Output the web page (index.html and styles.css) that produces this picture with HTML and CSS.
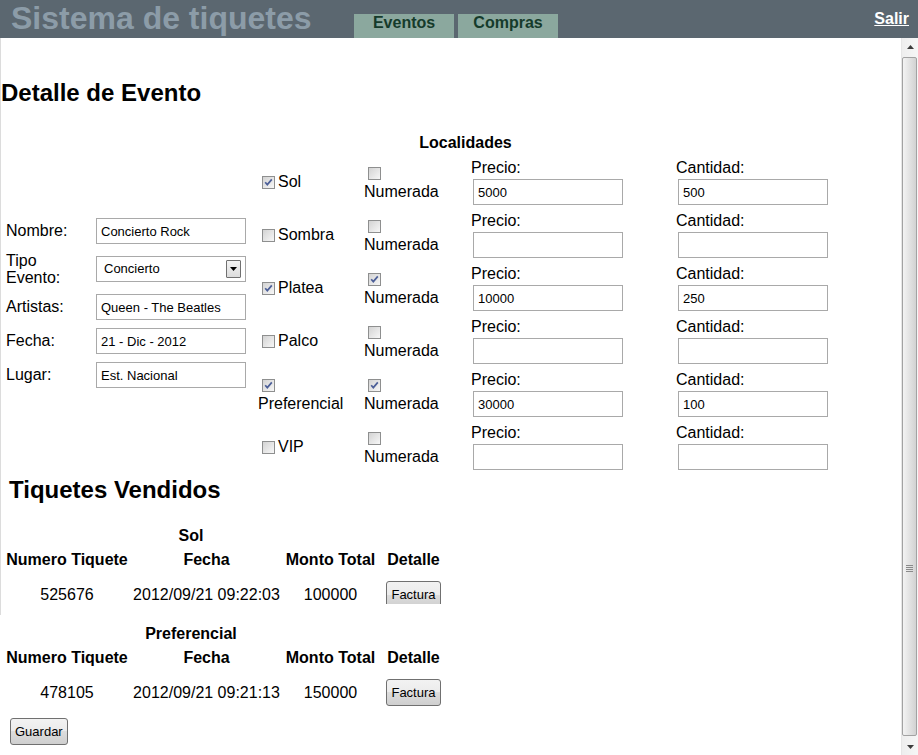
FILE: index.html
```html
<!DOCTYPE html>
<html lang="es">
<head>
<meta charset="utf-8">
<title>Sistema de tiquetes</title>
<link rel="stylesheet" href="styles.css">
</head>
<body>
<header class="topbar">
  <div class="brand">Sistema de tiquetes</div>
  <nav class="tabs">
    <a class="tab" href="#">Eventos</a>
    <a class="tab" href="#">Compras</a>
  </nav>
  <a class="logout" href="#">Salir</a>
</header>
<div class="frame">
  <main class="content">
    <section class="panel">
      <h2 class="title">Detalle de Evento</h2>
      <div class="event-form">
        <div class="fields">
          <label class="f-label">Nombre:</label>
          <input class="txt" type="text" value="Concierto Rock">
          <label class="f-label two">Tipo Evento:</label>
          <div class="select"><span>Concierto</span><span class="dd"><svg width="7" height="4" viewBox="0 0 7 4"><polygon points="0,0 7,0 3.5,4" fill="#000"/></svg></span></div>
          <label class="f-label">Artistas:</label>
          <input class="txt" type="text" value="Queen - The Beatles">
          <label class="f-label">Fecha:</label>
          <input class="txt" type="text" value="21 - Dic - 2012">
          <label class="f-label">Lugar:</label>
          <input class="txt" type="text" value="Est. Nacional">
        </div>
        <div class="zones">
          <div class="zones-head">Localidades</div>

          <div class="zone-name"><span class="cb"><svg width="11" height="11" viewBox="0 0 11 11"><polyline points="2.2,5.2 4.3,7.6 8.8,2.4" fill="none" stroke="#4c5f98" stroke-width="1.7"/></svg></span>Sol</div>
          <div class="zone-num"><span class="cb"></span>Numerada</div>
          <div class="zone-field"><span class="z-label">Precio:</span><input class="txt" type="text" value="5000"></div>
          <div class="zone-field"><span class="z-label">Cantidad:</span><input class="txt" type="text" value="500"></div>

          <div class="zone-name"><span class="cb"></span>Sombra</div>
          <div class="zone-num"><span class="cb"></span>Numerada</div>
          <div class="zone-field"><span class="z-label">Precio:</span><input class="txt" type="text" value=""></div>
          <div class="zone-field"><span class="z-label">Cantidad:</span><input class="txt" type="text" value=""></div>

          <div class="zone-name"><span class="cb"><svg width="11" height="11" viewBox="0 0 11 11"><polyline points="2.2,5.2 4.3,7.6 8.8,2.4" fill="none" stroke="#4c5f98" stroke-width="1.7"/></svg></span>Platea</div>
          <div class="zone-num"><span class="cb"><svg width="11" height="11" viewBox="0 0 11 11"><polyline points="2.2,5.2 4.3,7.6 8.8,2.4" fill="none" stroke="#4c5f98" stroke-width="1.7"/></svg></span>Numerada</div>
          <div class="zone-field"><span class="z-label">Precio:</span><input class="txt" type="text" value="10000"></div>
          <div class="zone-field"><span class="z-label">Cantidad:</span><input class="txt" type="text" value="250"></div>

          <div class="zone-name"><span class="cb"></span>Palco</div>
          <div class="zone-num"><span class="cb"></span>Numerada</div>
          <div class="zone-field"><span class="z-label">Precio:</span><input class="txt" type="text" value=""></div>
          <div class="zone-field"><span class="z-label">Cantidad:</span><input class="txt" type="text" value=""></div>

          <div class="zone-name stack"><span class="cb"><svg width="11" height="11" viewBox="0 0 11 11"><polyline points="2.2,5.2 4.3,7.6 8.8,2.4" fill="none" stroke="#4c5f98" stroke-width="1.7"/></svg></span>Preferencial</div>
          <div class="zone-num"><span class="cb"><svg width="11" height="11" viewBox="0 0 11 11"><polyline points="2.2,5.2 4.3,7.6 8.8,2.4" fill="none" stroke="#4c5f98" stroke-width="1.7"/></svg></span>Numerada</div>
          <div class="zone-field"><span class="z-label">Precio:</span><input class="txt" type="text" value="30000"></div>
          <div class="zone-field"><span class="z-label">Cantidad:</span><input class="txt" type="text" value="100"></div>

          <div class="zone-name"><span class="cb"></span>VIP</div>
          <div class="zone-num"><span class="cb"></span>Numerada</div>
          <div class="zone-field"><span class="z-label">Precio:</span><input class="txt" type="text" value=""></div>
          <div class="zone-field"><span class="z-label">Cantidad:</span><input class="txt" type="text" value=""></div>
        </div>
      </div>
      <h2 class="title sold">Tiquetes Vendidos</h2>
      <div class="clip">
        <div class="tickets">
          <div class="t-cap">Sol</div>
          <div class="t-head first">Numero Tiquete</div>
          <div class="t-head">Fecha</div>
          <div class="t-head">Monto Total</div>
          <div class="t-head">Detalle</div>
          <div class="t-cell">525676</div>
          <div class="t-cell">2012/09/21 09:22:03</div>
          <div class="t-cell">100000</div>
          <div class="t-cell"><button class="btn" type="button">Factura</button></div>
        </div>
      </div>
    </section>
    <div class="tickets second">
      <div class="t-cap">Preferencial</div>
      <div class="t-head first">Numero Tiquete</div>
      <div class="t-head">Fecha</div>
      <div class="t-head">Monto Total</div>
      <div class="t-head">Detalle</div>
      <div class="t-cell">478105</div>
      <div class="t-cell">2012/09/21 09:21:13</div>
      <div class="t-cell">150000</div>
      <div class="t-cell"><button class="btn" type="button">Factura</button></div>
    </div>
    <button class="btn save" type="button">Guardar</button>
  </main>
  <div class="scrollbar">
    <div class="sb-btn"><svg width="7" height="4" viewBox="0 0 7 4"><polygon points="0,4 7,4 3.5,0" fill="#3c3c3c"/></svg></div>
    <div class="sb-thumb"><div class="grip"><span></span><span></span><span></span><span></span></div></div>
    <div class="sb-btn"><svg width="7" height="4" viewBox="0 0 7 4"><polygon points="0,0 7,0 3.5,4" fill="#3c3c3c"/></svg></div>
  </div>
</div>
</body>
</html>
```

FILE: styles.css
```css
html, body {
  margin: 0;
  padding: 0;
  height: 755px;
  overflow: hidden;
}
body {
  font-family: "Liberation Sans", Arial, sans-serif;
  font-size: 16px;
  line-height: 18px;
  color: #000;
  background: #fff;
}

/* ---------- top bar ---------- */
.topbar {
  height: 38px;
  background: #5b6770;
  display: flex;
  align-items: flex-start;
}
.brand {
  padding-left: 11px;
  font-weight: bold;
  font-size: 32px;
  line-height: 36px;
  color: #8c9ca8;
  white-space: nowrap;
}
.tabs {
  display: flex;
  gap: 4px;
  margin-top: 14px;
  margin-left: 42.5px;
}
.tab {
  width: 100px;
  height: 24px;
  box-sizing: border-box;
  line-height: 18px;
  text-align: center;
  background: #8ba89e;
  color: #153b2b;
  font-weight: bold;
  font-size: 16px;
  text-decoration: none;
}
.logout {
  margin-left: auto;
  margin-top: 10px;
  margin-right: 9px;
  color: #fff;
  font-weight: bold;
  font-size: 16px;
  line-height: 18px;
  text-decoration: underline;
}

/* ---------- frame ---------- */
.frame {
  display: flex;
  height: 717px;
}
.content {
  flex: 1;
  min-width: 0;
  overflow: hidden;
}
.panel {
  border-left: 1px solid #dcdcdc;
  padding-top: 41px;
  padding-bottom: 11px;
}
.title {
  margin: 0;
  font-size: 24px;
  line-height: 28px;
  font-weight: bold;
  white-space: nowrap;
}
.title.sold {
  margin-top: 6px;
  padding-left: 8px;
}

/* ---------- event form ---------- */
.event-form {
  display: flex;
  align-items: center;
  margin-top: 27px;
}
.fields {
  display: grid;
  grid-template-columns: 80px 150px;
  grid-template-rows: 26px 34px 26px 26px 26px;
  column-gap: 10px;
  row-gap: 8px;
  align-items: center;
  margin-left: 5px;
  margin-top: 2px;
}
.f-label.two {
  line-height: 17px;
}
.txt {
  width: 150px;
  height: 26px;
  box-sizing: border-box;
  margin: 0;
  padding: 0 4px;
  border: 1px solid #a9a9a9;
  background: #fff;
  color: #000;
  font-family: "Liberation Sans", Arial, sans-serif;
  font-size: 13px;
  outline: none;
}
.select {
  width: 150px;
  height: 26px;
  box-sizing: border-box;
  border: 1px solid #a9a9a9;
  display: flex;
  align-items: center;
  padding-left: 7px;
  font-size: 13px;
}
.dd {
  margin-left: auto;
  margin-right: 4px;
  width: 15px;
  height: 18px;
  box-sizing: border-box;
  border: 1px solid #707070;
  border-radius: 1px;
  background: linear-gradient(#f4f4f4, #dcdcdc);
  display: flex;
  align-items: center;
  justify-content: center;
}
.dd svg { display: block; }

.zones {
  display: grid;
  grid-template-columns: 103px 104px 202px 153px;
  grid-template-rows: 18px repeat(6, 46px);
  column-gap: 3px;
  row-gap: 7px;
  margin-left: 12px;
}
.zones-head {
  grid-column: 1 / 4;
  text-align: center;
  font-weight: bold;
}
.zone-name {
  grid-column-start: 1;
  display: flex;
  align-items: center;
  white-space: nowrap;
}
.zone-name.stack,
.zone-num {
  flex-direction: column;
  align-items: flex-start;
  justify-content: center;
}
.zone-num {
  display: flex;
}
.cb {
  display: flex;
  align-items: center;
  justify-content: center;
  flex-shrink: 0;
  width: 13px;
  height: 13px;
  box-sizing: border-box;
  margin: 3px 3px 3px 4px;
  border: 1px solid #8e8f8f;
  background: linear-gradient(135deg, #d3d3d3, #f7f7f7);
}
.cb svg { display: block; }
.zone-field {
  display: flex;
  flex-direction: column;
  align-items: flex-start;
}
.z-label {
  line-height: 18px;
}
.zone-field .txt {
  margin: 2px 0 0 2px;
}

/* ---------- tickets ---------- */
.clip {
  margin-top: 23px;
  height: 77px;
  overflow: hidden;
}
.tickets {
  display: grid;
  grid-template-columns: 122px 147px 91px 65px;
  grid-template-rows: 18px 18px 33px;
  column-gap: 5px;
  row-gap: 6px;
  margin-left: 5px;
}
.tickets.second {
  margin-left: 6px;
  margin-top: 10px;
}
.t-cap {
  grid-column: 1 / 4;
  text-align: center;
  font-weight: bold;
}
.t-head {
  text-align: center;
  font-weight: bold;
  white-space: nowrap;
}
.t-head.first {
  grid-column-start: 1;
}
.t-cell {
  align-self: end;
  height: 27px;
  display: flex;
  align-items: center;
  justify-content: center;
  white-space: nowrap;
}
.btn {
  height: 27px;
  min-width: 55px;
  box-sizing: border-box;
  margin: 0;
  padding: 0 4px;
  border: 1px solid #707070;
  border-radius: 3px;
  background: linear-gradient(#f2f2f2 0%, #ebebeb 50%, #dddddd 50%, #cfcfcf 100%);
  color: #000;
  font-family: "Liberation Sans", Arial, sans-serif;
  font-size: 13px;
}
.btn.save {
  display: block;
  margin: 12px 0 0 10px;
}

/* ---------- scrollbar ---------- */
.scrollbar {
  width: 17px;
  flex-shrink: 0;
  display: flex;
  flex-direction: column;
  box-sizing: border-box;
  border-left: 1px solid #e6e6e6;
  background: linear-gradient(to right, #eeeeee, #f6f6f6);
}
.sb-btn {
  height: 17px;
  display: flex;
  align-items: center;
  justify-content: center;
}
.sb-btn svg { display: block; }
.sb-thumb {
  flex: 1;
  margin: 2px 1px 2px 0;
  border: 1px solid #a2a2a2;
  border-radius: 2px;
  background: linear-gradient(to right, #f3f3f3, #e4e4e4 45%, #d2d2d2);
  padding-top: 507px;
  box-sizing: border-box;
}
.grip {
  display: flex;
  flex-direction: column;
  align-items: center;
  gap: 1px;
}
.grip span {
  display: block;
  width: 7px;
  height: 1px;
  background: #8a8a8a;
}
```
